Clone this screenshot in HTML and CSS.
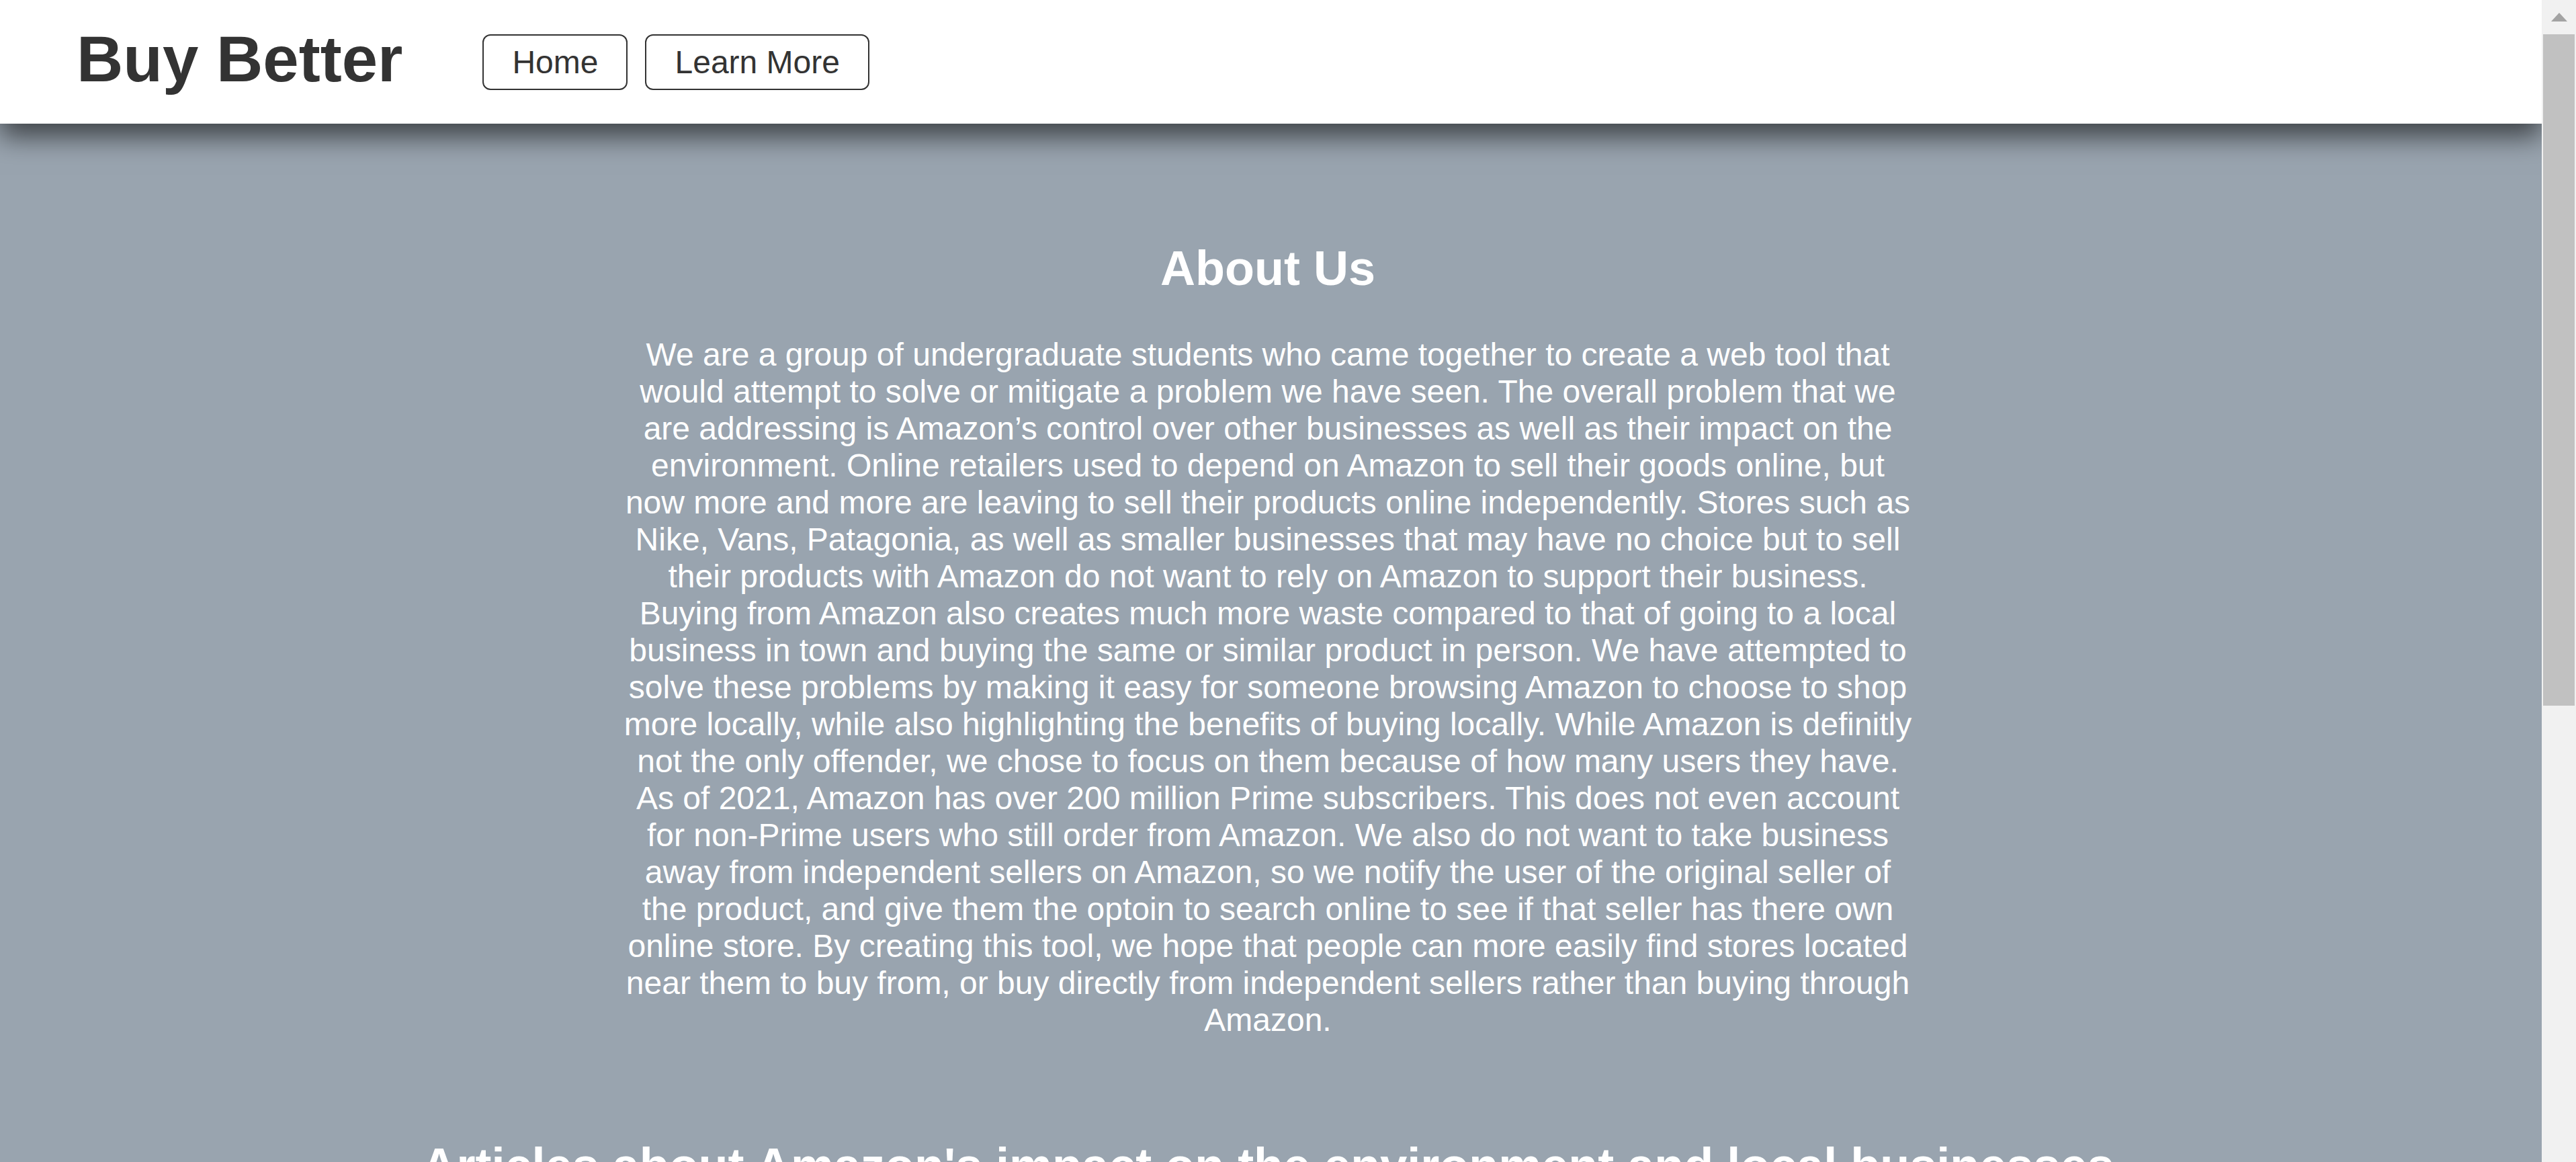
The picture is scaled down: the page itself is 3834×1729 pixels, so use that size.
FILE: index.html
```html
<!DOCTYPE html>
<html lang="en">
<head>
<meta charset="utf-8">
<title>Buy Better</title>
<link rel="stylesheet" href="styles.css">
</head>
<body>
<div class="page">
  <header class="site-header">
    <h1 class="brand">Buy Better</h1>
    <nav class="nav">
      <button class="nav-btn">Home</button>
      <button class="nav-btn">Learn More</button>
    </nav>
  </header>
  <main class="content">
    <section class="about">
      <h2 class="section-title">About Us</h2>
      <p class="about-text">We are a group of undergraduate students who came together to create a web tool that would attempt to solve or mitigate a problem we have seen. The overall problem that we are addressing is Amazon’s control over other businesses as well as their impact on the environment. Online retailers used to depend on Amazon to sell their goods online, but now more and more are leaving to sell their products online independently. Stores such as Nike, Vans, Patagonia, as well as smaller businesses that may have no choice but to sell their products with Amazon do not want to rely on Amazon to support their business. Buying from Amazon also creates much more waste compared to that of going to a local business in town and buying the same or similar product in person. We have attempted to solve these problems by making it easy for someone browsing Amazon to choose to shop more locally, while also highlighting the benefits of buying locally. While Amazon is definitly not the only offender, we chose to focus on them because of how many users they have. As of 2021, Amazon has over 200 million Prime subscribers. This does not even account for non-Prime users who still order from Amazon. We also do not want to take business away from independent sellers on Amazon, so we notify the user of the original seller of the product, and give them the optoin to search online to see if that seller has there own online store. By creating this tool, we hope that people can more easily find stores located near them to buy from, or buy directly from independent sellers rather than buying through Amazon.</p>
    </section>
    <section class="articles">
      <h2 class="section-title">Articles about Amazon's impact on the environment and local businesses</h2>
    </section>
  </main>
</div>
<div class="scrollbar">
  <div class="scroll-arrow"><span class="arrow-up"></span></div>
  <div class="scroll-thumb"></div>
</div>
</body>
</html>
```
FILE: styles.css
```css
html, body {
  margin: 0;
  padding: 0;
  height: 100%;
  overflow: hidden;
}

body {
  display: flex;
  flex-direction: row;
  font-family: "Liberation Sans", Arial, sans-serif;
  background: #99a4af;
}

.page {
  flex: 1;
  min-width: 0;
  height: 100vh;
  overflow: hidden;
  background: #99a4af;
  display: flex;
  flex-direction: column;
}

.site-header {
  position: relative;
  z-index: 1;
  flex: 0 0 184px;
  height: 184px;
  box-sizing: border-box;
  background: #ffffff;
  display: flex;
  align-items: center;
  padding-left: 114px;
  box-shadow: 0 19px 38px rgba(0, 0, 0, 0.6);
}

.brand {
  margin: 0 119px 9px 0;
  font-size: 96px;
  font-weight: bold;
  line-height: 110px;
  color: #333333;
}

.nav {
  display: flex;
  gap: 26px;
}

.nav-btn {
  font-family: "Liberation Sans", Arial, sans-serif;
  font-size: 48px;
  line-height: 55px;
  color: #333333;
  background: #ffffff;
  border: 2.5px solid #333333;
  border-radius: 12px;
  padding: 12px 42px;
  margin: 0;
  cursor: pointer;
}

.content {
  flex: 1;
  padding: 174px 9px 0 0;
  color: #ffffff;
}

.section-title {
  margin: 0 0 59px;
  font-size: 72px;
  line-height: 83px;
  font-weight: bold;
  text-align: center;
  color: #ffffff;
}

.about-text {
  max-width: 1920px;
  margin: 0 auto;
  font-size: 48px;
  line-height: 55px;
  text-align: center;
  color: #ffffff;
}

.articles {
  margin-top: 148px;
}

.scrollbar {
  flex: 0 0 51px;
  width: 51px;
  height: 100vh;
  background: #f1f1f1;
  display: flex;
  flex-direction: column;
}

.scroll-arrow {
  height: 51px;
  display: flex;
  align-items: center;
  justify-content: center;
}

.arrow-up {
  width: 0;
  height: 0;
  border-left: 12.5px solid transparent;
  border-right: 12.5px solid transparent;
  border-bottom: 13px solid #a3a3a3;
}

.scroll-thumb {
  height: 999px;
  margin: 0 2px;
  background: #c1c1c1;
}
```
